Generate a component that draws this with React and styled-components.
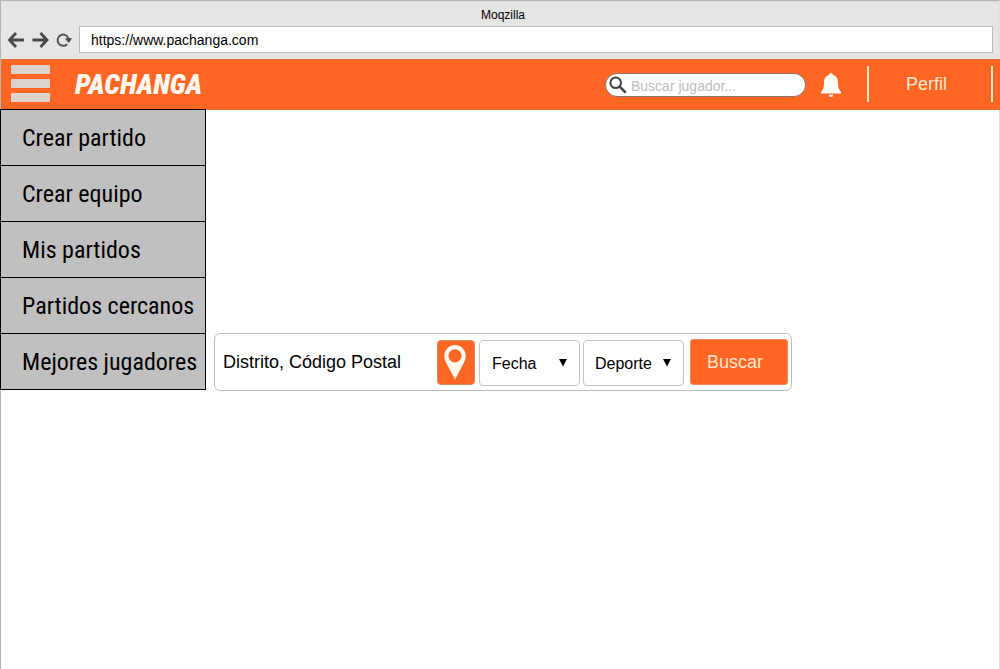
import React from "react";
import styled, { createGlobalStyle } from "styled-components";

const orange = "#ff6624";
const cream = "#ffe6cc";

const GlobalStyle = createGlobalStyle`
  *, *::before, *::after { box-sizing: border-box; }
  body {
    margin: 0;
    background: #fff;
    color: #000;
    font-family: "Liberation Sans", Arial, sans-serif;
  }
  button, input, select { font: inherit; color: inherit; margin: 0; }
`;

const Browser = styled.div`
  min-height: 100vh;
  border: 1px solid #b4b4b4;
  border-right-color: #e0e0e0;
  border-bottom: 0;
`;

const Chrome = styled.div`
  padding: 6px 6px 6px 3px;
  background: #e5e5e5;
  border-top: 1px solid #dadada;
`;

const WindowTitle = styled.div`
  height: 18px;
  padding-left: 9px;
  font-size: 12px;
  line-height: 14px;
  text-align: center;
`;

const AddressRow = styled.div`
  display: flex;
  align-items: center;
`;

const NavButton = styled.button`
  display: flex;
  align-items: center;
  justify-content: center;
  width: 24px;
  height: 24px;
  padding: 0;
  border: 0;
  background: none;
  flex: none;
`;

const AddressInput = styled.input`
  flex: 1;
  min-width: 0;
  height: 27px;
  margin-left: 3px;
  padding: 0 11px;
  border: 1px solid #bababa;
  border-radius: 0;
  background: #fff;
  font-size: 14px;
  outline: none;
`;

const Header = styled.header`
  display: flex;
  align-items: center;
  height: 51px;
  margin-right: -1px;
  padding: 0 7px 0 10px;
  background: ${orange};
  border-top: 1px solid #e0703c;
  border-bottom: 1px solid #ee6a30;
`;

const MenuButton = styled.button`
  display: flex;
  flex-direction: column;
  gap: 5px;
  width: 39px;
  margin-bottom: 2px;
  padding: 0;
  border: 0;
  background: none;
`;

const MenuBar = styled.span`
  height: 9px;
  border-radius: 1px;
  background: #dcd3ce;
`;

const Logo = styled.a`
  margin: 0 auto 0 25px;
  color: #fff8ee;
  font-family: "Roboto Condensed", Roboto, "Liberation Sans", sans-serif;
  font-size: 28px;
  font-style: italic;
  font-weight: 900;
  line-height: 32px;
  text-decoration: none;
`;

const PlayerSearch = styled.label`
  display: flex;
  align-items: center;
  gap: 4px;
  width: 201px;
  height: 24px;
  padding: 0 10px 0 3px;
  border: 1px solid #8a7468;
  border-radius: 12px;
  background: #fff;
`;

const PlayerInput = styled.input`
  flex: 1;
  min-width: 0;
  padding: 2px 0 0;
  border: 0;
  background: none;
  font-size: 14px;
  line-height: 18px;
  outline: none;
  &::placeholder { color: #bebebe; opacity: 1; }
`;

const BellButton = styled(NavButton)`
  margin: 0 24px 0 13px;
`;

const Profile = styled.a`
  display: flex;
  align-items: center;
  justify-content: center;
  width: 126px;
  height: 36px;
  margin-bottom: 2px;
  padding: 1px 7px 0 0;
  border: solid ${cream};
  border-width: 0 2px;
  color: ${cream};
  font-size: 18px;
  text-decoration: none;
`;

const Main = styled.main`
  display: flex;
  align-items: flex-end;
  gap: 8px;
  margin-left: -1px;
  margin-top: -1px;
`;

const Sidebar = styled.nav`
  flex: none;
  width: 206px;
  margin-bottom: 1px;
  border: solid #000;
  border-width: 1px 1px 0;
`;

const SidebarLink = styled.a`
  display: flex;
  align-items: center;
  height: 56px;
  padding-left: 21px;
  border-bottom: 1px solid #000;
  background: #c0c0c0;
  color: #000;
  font-family: "Roboto Condensed", Roboto, "Liberation Sans", sans-serif;
  font-size: 24px;
  line-height: 28px;
  white-space: nowrap;
  text-decoration: none;
`;

const MatchSearch = styled.form`
  display: flex;
  align-items: center;
  flex: 0 1 578px;
  min-width: 0;
  height: 58px;
  padding: 0 3px 0 0;
  border: 1px solid #bdbdbd;
  border-radius: 6px;
  background: #fff;
`;

const PlaceInput = styled.input`
  flex: 1;
  min-width: 0;
  height: 46px;
  padding: 1px 8px 0;
  border: 0;
  background: none;
  font-size: 18px;
  outline: none;
  &::placeholder { color: #000; opacity: 1; }
`;

const LocateButton = styled.button`
  display: flex;
  align-items: center;
  justify-content: center;
  width: 38px;
  height: 45px;
  margin-right: 4px;
  padding: 0 2px 0 0;
  border: 1px solid #dc8a60;
  border-radius: 4px;
  background: ${orange};
`;

const SelectBox = styled.div`
  display: grid;
  align-items: center;
  width: 101px;
  height: 46px;
  margin: 1px 3px 0 0;
  border: 1px solid #c4c4c4;
  border-radius: 4px;
  > * { grid-area: 1 / 1; }
  > svg { justify-self: end; margin-right: 12px; pointer-events: none; }
`;

const Select = styled.select`
  appearance: none;
  width: 100%;
  height: 44px;
  padding: 2px 0 0 ${(p) => p.$inset}px;
  border: 0;
  background: none;
  font-size: 16px;
  outline: none;
`;

const SubmitButton = styled.button`
  width: 98px;
  height: 46px;
  margin-left: 3px;
  padding: 0 8px 0 0;
  border: 1px solid #f08a58;
  border-radius: 3px;
  background: ${orange};
  color: ${cream};
  font-size: 18px;
`;

const Arrow = ({ back }) => (
  <svg width="18" height="16" viewBox="0 0 18 16" fill="none" stroke="#484848" strokeWidth="2.8">
    {back ? <path d="M17 8H3M9 1 2.500 8 9 15" /> : <path d="M1.500 8H15M9.500 1 16 8 9.500 15" />}
  </svg>
);

const Reload = () => (
  <svg width="16" height="16" viewBox="0 0 16 16">
    <path d="M11.200 12.200A5.600 5.600 0 1 1 12.600 6.600" fill="none" stroke="#555" strokeWidth="2" />
    <path d="M8.800 6.600 16 6l-3 5z" fill="#484848" />
  </svg>
);

const Magnifier = () => (
  <svg width="18" height="18" viewBox="0 0 18 18" fill="none" stroke="#444">
    <circle cx="6.7" cy="6.7" r="5.3" strokeWidth="2" />
    <path d="m10.7 10.7 6 6" strokeWidth="2.6" />
  </svg>
);

const Bell = () => (
  <svg width="20" height="24" viewBox="0 0 20 24" fill="#fffaf2">
    <path d="M10 0a2 2 0 0 0-2 2c-3.600 1-5 3.700-5 7.500 0 4.500-.5 7-3 9.500v1.500h20V19c-2.500-2.500-3-5-3-9.500C17 5.700 15.600 3 12 2a2 2 0 0 0-2-2z" />
    <path d="M7.800 21.700h4.400a2.200 2.200 0 0 1-4.400 0z" />
  </svg>
);

const Pin = () => (
  <svg width="22" height="35" viewBox="0 0 22 35" fill="#fffaf2" fillRule="evenodd">
    <path d="M11 0a10.700 10.700 0 0 0-10.700 10.700c0 3.300 1 5.300 2.400 8L11 34.500l8.300-15.800c1.400-2.700 2.400-4.700 2.400-8A10.700 10.700 0 0 0 11 0zm0 4.200a6.600 6.600 0 1 1 0 13.200 6.600 6.600 0 0 1 0-13.200z" />
  </svg>
);

const Caret = () => (
  <svg width="8" height="8" viewBox="0 0 8 8">
    <path d="M0 0h8L4 7.500z" />
  </svg>
);

const sections = ["Crear partido", "Crear equipo", "Mis partidos", "Partidos cercanos", "Mejores jugadores"];

export default function App() {
  return (
    <>
      <GlobalStyle />
      <Browser>
        <Chrome>
          <WindowTitle>Moqzilla</WindowTitle>
          <AddressRow>
            <NavButton aria-label="Atrás"><Arrow back /></NavButton>
            <NavButton aria-label="Adelante"><Arrow /></NavButton>
            <NavButton aria-label="Recargar"><Reload /></NavButton>
            <AddressInput aria-label="Dirección" defaultValue="https://www.pachanga.com" />
          </AddressRow>
        </Chrome>
        <Header>
          <MenuButton aria-label="Menú"><MenuBar /><MenuBar /><MenuBar /></MenuButton>
          <Logo href="#">PACHANGA</Logo>
          <PlayerSearch>
            <Magnifier />
            <PlayerInput aria-label="Buscar jugador" placeholder="Buscar jugador..." />
          </PlayerSearch>
          <BellButton aria-label="Notificaciones"><Bell /></BellButton>
          <Profile href="#perfil">Perfil</Profile>
        </Header>
        <Main>
          <Sidebar>
            {sections.map((name) => (
              <SidebarLink key={name} href="#">{name}</SidebarLink>
            ))}
          </Sidebar>
          <MatchSearch onSubmit={(e) => e.preventDefault()}>
            <PlaceInput aria-label="Distrito, Código Postal" placeholder="Distrito, Código Postal" />
            <LocateButton type="button" aria-label="Usar mi ubicación"><Pin /></LocateButton>
            <SelectBox>
              <Select $inset={12} aria-label="Fecha"><option>Fecha</option></Select>
              <Caret />
            </SelectBox>
            <SelectBox>
              <Select $inset={11} aria-label="Deporte"><option>Deporte</option></Select>
              <Caret />
            </SelectBox>
            <SubmitButton>Buscar</SubmitButton>
          </MatchSearch>
        </Main>
      </Browser>
    </>
  );
}
